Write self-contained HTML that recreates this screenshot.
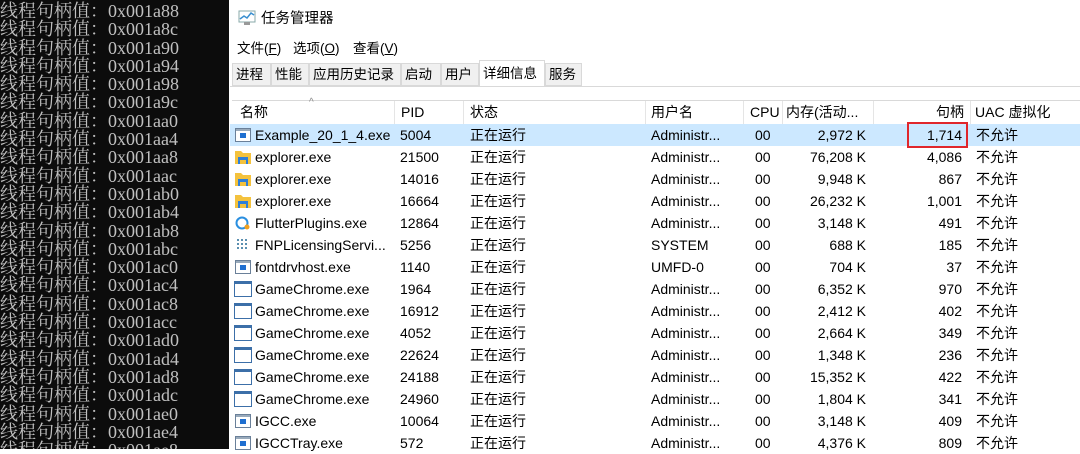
<!DOCTYPE html>
<html><head><meta charset="utf-8"><style>
*{margin:0;padding:0;box-sizing:border-box}
body{width:1080px;height:449px;overflow:hidden;background:#fff;position:relative;font-family:"Liberation Sans","Noto Sans CJK SC",sans-serif;font-size:14px;color:#000}
#con{position:absolute;left:0;top:0;width:229px;height:449px;background:#0c0c0c;color:#c0c0c0;font-family:"Liberation Serif","Noto Serif CJK SC",serif;font-size:18px;line-height:18.3px;padding-top:2px;white-space:pre;overflow:hidden}
.a{position:absolute;white-space:nowrap}
.tab{position:absolute;top:63px;height:23px;background:#f0f0f0;border:1px solid #d9d9d9;font-size:13.5px;line-height:21px;padding:0 3px}
.row{position:absolute;left:232px;width:848px;height:22px;line-height:22px}
.row span{position:absolute;white-space:nowrap}
.ic{position:absolute;left:3px;top:4px;width:16px;height:14px}
.hd span{position:absolute;top:0;white-space:nowrap}
.vl{position:absolute;top:101px;height:23px;width:1px;background:#e5e5e5}
</style></head><body>
<div id="con">线程句柄值：0x001a88
线程句柄值：0x001a8c
线程句柄值：0x001a90
线程句柄值：0x001a94
线程句柄值：0x001a98
线程句柄值：0x001a9c
线程句柄值：0x001aa0
线程句柄值：0x001aa4
线程句柄值：0x001aa8
线程句柄值：0x001aac
线程句柄值：0x001ab0
线程句柄值：0x001ab4
线程句柄值：0x001ab8
线程句柄值：0x001abc
线程句柄值：0x001ac0
线程句柄值：0x001ac4
线程句柄值：0x001ac8
线程句柄值：0x001acc
线程句柄值：0x001ad0
线程句柄值：0x001ad4
线程句柄值：0x001ad8
线程句柄值：0x001adc
线程句柄值：0x001ae0
线程句柄值：0x001ae4
线程句柄值：0x001ae8</div>
<svg class="a" style="left:238px;top:10px" width="18" height="16"><rect x="1" y="1" width="16" height="11" fill="#fff" stroke="#8aa" /><polyline points="2,9 6,6 9,8 13,3 16,5" fill="none" stroke="#3a8fd0" stroke-width="1.5"/><rect x="6" y="12" width="6" height="3" fill="#999"/></svg>
<div class="a" style="left:261px;top:7px;font-size:14.5px">任务管理器</div>
<div class="a" style="left:237px;top:37px;font-size:13.5px">文件(<u>F</u>)</div>
<div class="a" style="left:293px;top:37px;font-size:13.5px">选项(<u>O</u>)</div>
<div class="a" style="left:353px;top:37px;font-size:13.5px">查看(<u>V</u>)</div>
<div class="tab" style="left:232px;width:39px">进程</div>
<div class="tab" style="left:271px;width:38px">性能</div>
<div class="tab" style="left:309px;width:92px">应用历史记录</div>
<div class="tab" style="left:401px;width:40px">启动</div>
<div class="tab" style="left:441px;width:38px">用户</div>
<div class="tab" style="left:479px;top:60px;height:27px;width:66px;background:#fff;border-bottom:none;line-height:25px">详细信息</div>
<div class="tab" style="left:545px;width:37px">服务</div>
<div class="a" style="left:230px;top:86px;width:850px;height:1px;background:#d9d9d9"></div>
<div class="a" style="left:232px;top:100px;width:848px;height:1px;background:#d9d9d9"></div>
<div class="a" style="left:309px;top:97px;font-size:10px;color:#888">^</div>
<div class="vl" style="left:394px"></div><div class="vl" style="left:463px"></div><div class="vl" style="left:645px"></div><div class="vl" style="left:743px"></div><div class="vl" style="left:782px"></div><div class="vl" style="left:873px"></div><div class="vl" style="left:970px"></div>
<div class="row hd" style="top:101px;height:23px;line-height:23px">
<span style="left:8px">名称</span><span style="left:169px">PID</span><span style="left:238px">状态</span><span style="left:419px">用户名</span><span style="left:518px">CPU</span><span style="left:554px">内存(活动...</span><span style="right:116px">句柄</span><span style="left:743px">UAC 虚拟化</span>
</div>
<div class="a" style="left:230px;top:124px;width:850px;height:22px;background:#cce8ff"></div>
<div class="a" style="left:907px;top:122px;width:61px;height:26px;border:2px solid #e0262b"></div>
<div id="rows"></div>
<script>
var d=[
["Example_20_1_4.exe","5004","Administr...","2,972 K","1,714","w"],
["explorer.exe","21500","Administr...","76,208 K","4,086","f"],
["explorer.exe","14016","Administr...","9,948 K","867","f"],
["explorer.exe","16664","Administr...","26,232 K","1,001","f"],
["FlutterPlugins.exe","12864","Administr...","3,148 K","491","q"],
["FNPLicensingServi...","5256","SYSTEM","688 K","185","g"],
["fontdrvhost.exe","1140","UMFD-0","704 K","37","w"],
["GameChrome.exe","1964","Administr...","6,352 K","970","e"],
["GameChrome.exe","16912","Administr...","2,412 K","402","e"],
["GameChrome.exe","4052","Administr...","2,664 K","349","e"],
["GameChrome.exe","22624","Administr...","1,348 K","236","e"],
["GameChrome.exe","24188","Administr...","15,352 K","422","e"],
["GameChrome.exe","24960","Administr...","1,804 K","341","e"],
["IGCC.exe","10064","Administr...","3,148 K","409","w"],
["IGCCTray.exe","572","Administr...","4,376 K","809","w"]];
var ic={w:'<svg class="ic" viewBox="0 0 16 14"><rect x=".5" y=".5" width="15" height="13" fill="#fff" stroke="#6a8099"/><rect x="1" y="1" width="14" height="2" fill="#9ab"/><rect x="5" y="5" width="6" height="5" fill="#1f6fd0"/></svg>',
f:'<svg class="ic" viewBox="0 0 16 14"><path d="M0 1h6l2 2h8v11H0z" fill="#f4c23d"/><rect x="3" y="7" width="10" height="7" fill="#2f7fd8"/><rect x="5" y="10" width="6" height="4" fill="#f4c23d"/></svg>',
q:'<svg class="ic" viewBox="0 0 16 14"><circle cx="7" cy="7" r="5.5" fill="none" stroke="#2a8fe0" stroke-width="2"/><circle cx="12" cy="11" r="2.5" fill="#f0a020"/></svg>',
g:'<svg class="ic" viewBox="0 0 16 14"><g fill="#5a8fb0"><rect x="2" y="1" width="2" height="2"/><rect x="6" y="1" width="2" height="2"/><rect x="10" y="1" width="2" height="2"/><rect x="2" y="5" width="2" height="2"/><rect x="6" y="5" width="2" height="2"/><rect x="10" y="5" width="2" height="2"/><rect x="2" y="9" width="2" height="2"/><rect x="6" y="9" width="2" height="2"/><rect x="10" y="9" width="2" height="2"/></g></svg>',
e:'<svg class="ic" style="width:18px;height:16px;top:3px;left:2px" viewBox="0 0 18 16"><rect x=".5" y=".5" width="17" height="15" fill="#fff" stroke="#3c6fa8"/><rect x="1" y="1" width="16" height="2" fill="#3c6fa8"/></svg>'};
var h='';d.forEach(function(r,i){h+='<div class="row" style="top:'+(124+i*22)+'px">'+ic[r[5]]+'<span style="left:23px">'+r[0]+'</span><span style="left:168px">'+r[1]+'</span><span style="left:238px">正在运行</span><span style="left:419px">'+r[2]+'</span><span style="left:523px">00</span><span style="right:214px">'+r[3]+'</span><span style="right:118px">'+r[4]+'</span><span style="left:744px">不允许</span></div>'});
document.getElementById('rows').innerHTML=h;
</script>
</body></html>
